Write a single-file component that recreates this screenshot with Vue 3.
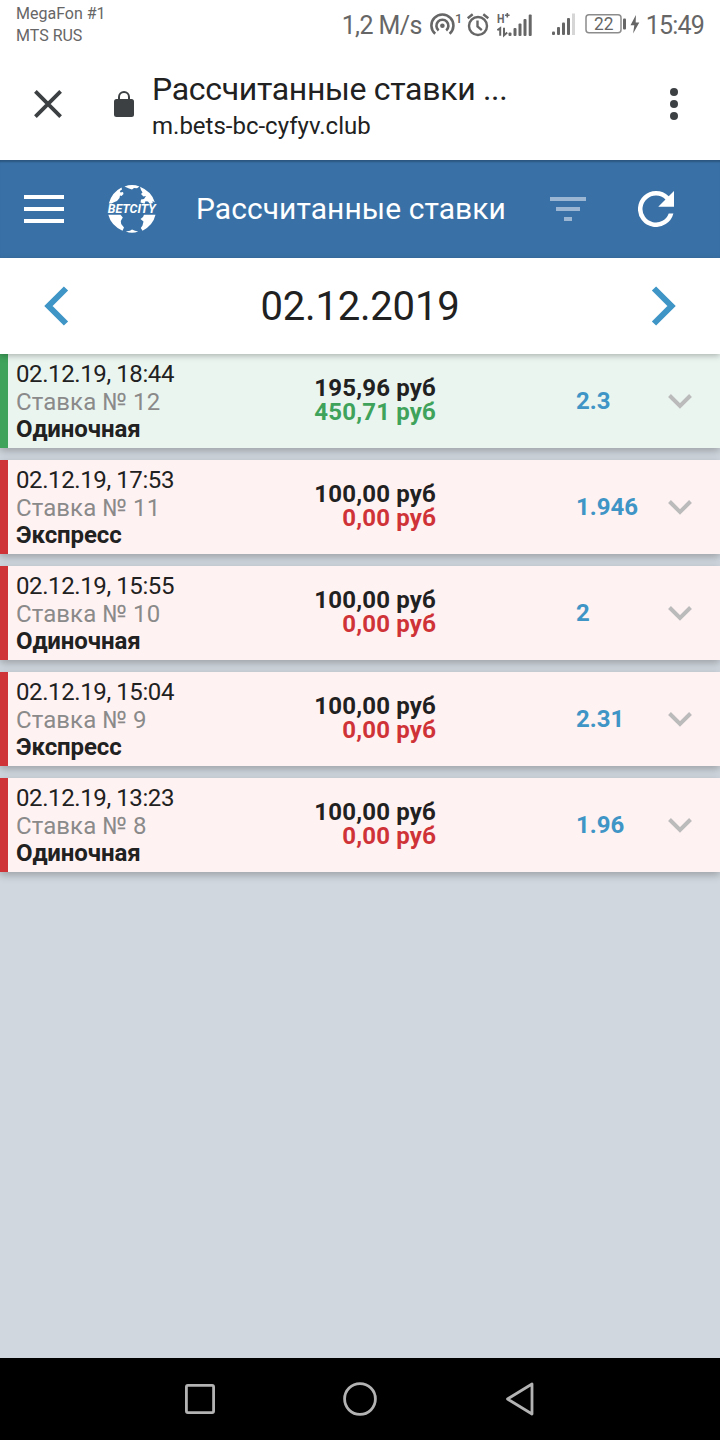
<template>
  <div class="screen">
    <header class="status-bar">
      <div class="carriers">
        <div>MegaFon #1</div>
        <div>MTS RUS</div>
      </div>
      <div class="status-icons">
        <span class="speed">1,2 M/s</span>
        <svg class="hotspot" width="34" height="28" viewBox="0 0 34 28">
          <g fill="none" stroke="#666" stroke-width="2.6">
            <path d="M5.2 22.8A11 11 0 1 1 19.6 22.8" />
            <path d="M8.6 19.4A6 6 0 1 1 16.2 19.4" />
          </g>
          <circle cx="12.4" cy="14.8" r="2.3" fill="#666" />
          <text x="25" y="11.6" font-size="13" font-weight="500">1</text>
        </svg>
        <svg class="alarm" width="24" height="28" viewBox="0 0 24 28">
          <g fill="none" stroke="#666" stroke-width="2.4">
            <circle cx="12" cy="15" r="9" />
            <path d="M11.5 9.5v6l4.3 3.6M1.7 7.3l5-4M22.3 7.3l-5-4" />
          </g>
        </svg>
        <svg class="signal" width="36" height="28" viewBox="0 0 36 28">
          <text x="0" y="12.2" font-size="13.5" font-weight="700" textLength="7.5" lengthAdjust="spacingAndGlyphs">H</text>
          <path d="M8 4.2h4.6M10.3 1.9v4.6" stroke="#666" stroke-width="1.6" />
          <path d="M.4 19.2l2.8-2v7.6M7 16.8v7.6l3.2-2.8" fill="none" stroke="#666" stroke-width="2" />
          <g fill="#666">
            <rect x="11.5" y="21.5" width="3" height="3.5" rx="1" />
            <rect x="16.5" y="17" width="3" height="8" rx="1" />
            <rect x="21.5" y="12.5" width="3" height="12.5" rx="1" />
            <rect x="26.5" y="8" width="3" height="17" rx="1" />
            <rect x="31.7" y="3.5" width="3" height="21.5" rx="1" />
          </g>
        </svg>
        <svg class="signal-2" width="24" height="28" viewBox="0 0 24 28">
          <g fill="#666">
            <rect x="0" y="20.5" width="3" height="3.5" rx="1" />
            <rect x="5" y="16" width="3" height="8" rx="1" />
            <rect x="10" y="11.5" width="3" height="12.5" rx="1" />
            <rect x="15" y="7" width="3" height="17" rx="1" />
            <rect x="20" y="2.5" width="3" height="21.5" fill="#d6d6d6" />
          </g>
        </svg>
        <svg class="battery" width="56" height="28" viewBox="0 0 56 28">
          <rect x="1" y="3.8" width="35" height="18" rx="3" fill="none" stroke="#8c8c8c" stroke-width="1.5" />
          <rect x="38" y="7.5" width="3" height="11" rx="1" fill="#666" />
          <text x="9" y="19.2" font-size="18" textLength="19.5" lengthAdjust="spacingAndGlyphs">22</text>
          <path d="M50.9 4l-5.4 10.2h3.8l-1.2 8.3 6.2-11h-3.6z" fill="#666" />
        </svg>
        <span class="clock">15:49</span>
      </div>
    </header>

    <div class="browser-bar">
      <svg class="close" width="28" height="28" viewBox="0 0 28 28">
        <path d="M1.4 1.4l25.2 25.2M26.6 1.4L1.4 26.6" stroke="#3c4043" stroke-width="3.8" />
      </svg>
      <svg class="lock" width="20" height="26" viewBox="0 0 20 26">
        <rect y="8" width="20" height="18" rx="2.5" fill="#3c4043" />
        <path d="M5 9V6a5 5 0 0 1 10 0v3" fill="none" stroke="#3c4043" stroke-width="2" />
      </svg>
      <div class="page-info">
        <div class="page-title">Рассчитанные ставки ...</div>
        <div class="page-url">m.bets-bc-cyfyv.club</div>
      </div>
      <svg class="more" width="8" height="32" viewBox="0 0 8 32">
        <g fill="#3c4043">
          <circle cx="4" cy="4" r="4" />
          <circle cx="4" cy="16" r="4" />
          <circle cx="4" cy="28" r="4" />
        </g>
      </svg>
    </div>

    <nav class="app-bar">
      <svg width="40" height="28" viewBox="0 0 40 28">
        <path d="M0 2h40M0 14h40M0 26h40" stroke="#fff" stroke-width="4" />
      </svg>
      <svg class="logo" width="50" height="50" viewBox="0 0 50 50">
        <g fill="#fff">
          <path d="M17.5 2.4Q25-.4 32.5 2.4L30 4.2 27 4 25 5.4 22 4.6z" />
          <path d="M1.8 19.5Q4.5 8.5 14.5 3.4L15 5.5 12.8 7 13.5 8.5 16 8 16.5 10 14.5 12 13 11.5 12.5 14 10 17 7 18.2 4.5 19.5z" />
          <path d="M33 2.8Q44.8 7.5 47.9 18.5L45.5 17 45.8 19 43 20 41 17.5 38.5 17.2 37.5 19.8 33.5 18.5 34 15.5 37 15 39 12 36.5 12.5 34 10 35.5 8.5 34 6z" />
          <path d="M1.3 30.8H13.5L15.8 33.5 13.8 37 14.2 40 17 43.5 15.5 46.7Q4 41.5 1.3 30.8z" />
          <path d="M37 30.8H48.5Q46 41.5 35.5 46.7L33.8 44 35.5 41.5 36.5 37.5 33.5 35 36 33z" />
          <path d="M18.8 47.4L23 46.8 25 45.4 28 46.8 31.2 47.4Q25 50 18.8 47.4z" />
        </g>
        <text x="0.8" y="29.4" class="logo-text" textLength="48" lengthAdjust="spacingAndGlyphs">BETCITY</text>
      </svg>
      <h1>Рассчитанные ставки</h1>
      <svg class="filter" width="36" height="24" viewBox="0 0 36 24">
        <path d="M0 2h36M6 12h24M14 22h8" stroke="#9ab6d2" stroke-width="4" />
      </svg>
      <svg class="refresh" width="36" height="36" viewBox="4 4 16 16">
        <path
          d="M17.65 6.35A7.95 7.95 0 0 0 12 4a8 8 0 1 0 7.73 10h-2.08A6 6 0 1 1 12 6c1.66 0 3.14.69 4.22 1.78L13 11h7V4z"
          fill="#fff"
        />
      </svg>
    </nav>

    <div class="date-bar">
      <svg width="25" height="40" viewBox="0 0 25 40">
        <path d="M22 2.5L4.5 20 22 37.5" fill="none" stroke="#3e95c6" stroke-width="6" />
      </svg>
      <span>{{ day }}</span>
      <svg width="25" height="40" viewBox="0 0 25 40">
        <path d="M3 2.5L20.5 20 3 37.5" fill="none" stroke="#3e95c6" stroke-width="6" />
      </svg>
    </div>

    <main class="bets">
      <div v-for="bet in bets" :key="bet.id" class="bet" :class="{ won: bet.won }">
        <div class="info">
          <div class="time">{{ bet.time }}</div>
          <div class="number">Ставка № {{ bet.id }}</div>
          <div class="kind">{{ bet.kind }}</div>
        </div>
        <div class="amounts">
          <div>{{ bet.stake }} руб</div>
          <div class="payout">{{ bet.payout }} руб</div>
        </div>
        <div class="odds">{{ bet.odds }}</div>
        <svg class="chevron" width="24" height="15" viewBox="0 0 24 15">
          <path d="M1.5 1.5L12 12 22.5 1.5" fill="none" stroke="#bbb" stroke-width="4" />
        </svg>
      </div>
    </main>

    <footer class="nav-bar">
      <svg width="30" height="30" viewBox="0 0 30 30">
        <rect x="1.4" y="1.4" width="27.2" height="27.2" rx="1.5" />
      </svg>
      <svg width="34" height="34" viewBox="0 0 34 34">
        <circle cx="17" cy="17" r="15.4" />
      </svg>
      <svg width="30" height="34" viewBox="0 0 30 34">
        <path d="M27 2v30L2.5 17z" stroke-linejoin="round" />
      </svg>
    </footer>
  </div>
</template>

<script setup>
import { ref } from 'vue'

const day = ref('02.12.2019')

const bets = ref([
  { id: 12, time: '02.12.19, 18:44', kind: 'Одиночная', stake: '195,96', payout: '450,71', odds: '2.3', won: true },
  { id: 11, time: '02.12.19, 17:53', kind: 'Экспресс', stake: '100,00', payout: '0,00', odds: '1.946', won: false },
  { id: 10, time: '02.12.19, 15:55', kind: 'Одиночная', stake: '100,00', payout: '0,00', odds: '2', won: false },
  { id: 9, time: '02.12.19, 15:04', kind: 'Экспресс', stake: '100,00', payout: '0,00', odds: '2.31', won: false },
  { id: 8, time: '02.12.19, 13:23', kind: 'Одиночная', stake: '100,00', payout: '0,00', odds: '1.96', won: false }
])
</script>

<style>
body {
  margin: 0;
}
</style>

<style scoped>
.screen {
  display: flex;
  flex-direction: column;
  width: 720px;
  height: 1440px;
  background: #d0d7de;
  color: #212121;
  font-family: Roboto, sans-serif;
  overflow: hidden;
  white-space: nowrap;
}

svg {
  display: block;
  flex: none;
}

.status-bar {
  display: flex;
  justify-content: space-between;
  height: 48px;
  padding: 0 16px;
  box-sizing: border-box;
  background: #fff;
  color: #666;
}

.status-bar text {
  fill: #666;
}

.carriers {
  padding-top: 3px;
  font-size: 16px;
  line-height: 22px;
}

.status-icons {
  display: flex;
  align-items: center;
  height: 50px;
}

.speed,
.clock {
  font-size: 25px;
}

.speed {
  letter-spacing: -0.6px;
}

.clock {
  margin-left: 5px;
  letter-spacing: -0.8px;
}

.hotspot {
  margin-left: 8px;
}

.alarm {
  margin-left: 2px;
}

.signal {
  margin-left: 7px;
}

.signal-2 {
  margin-left: 19px;
}

.battery {
  margin-left: 9px;
}

.browser-bar {
  display: flex;
  align-items: center;
  height: 112px;
  padding: 0 42px 0 34px;
  box-sizing: border-box;
  background: #fff;
}

.lock {
  margin-left: 52px;
}

.page-info {
  flex: 1;
  margin-left: 18px;
  padding-top: 4px;
}

.page-title {
  font-size: 32px;
  letter-spacing: -0.32px;
  line-height: 40px;
}

.page-url {
  font-size: 24px;
  line-height: 34px;
}

.app-bar {
  display: flex;
  align-items: center;
  height: 98px;
  padding: 0 46px 0 24px;
  box-sizing: border-box;
  background: #3971a6;
  box-shadow: inset 0 3px 2px -1px #2b5680;
  color: #fff;
}

.logo {
  margin-left: 43px;
}

.logo-text {
  fill: #fff;
  font-size: 12.5px;
  font-style: italic;
  font-weight: 700;
}

h1 {
  flex: 1;
  margin: 0 0 0 39px;
  padding-bottom: 2px;
  font-size: 30px;
  font-weight: 400;
  letter-spacing: 0.06px;
}

.refresh {
  margin-left: 52px;
}

.date-bar {
  position: relative;
  display: flex;
  align-items: center;
  justify-content: space-between;
  height: 96px;
  padding: 0 44px;
  background: #fff;
  box-shadow: 0 2px 6px rgba(0, 0, 0, 0.26);
  font-size: 40px;
  letter-spacing: -0.2px;
}

.bets {
  display: flex;
  flex: 1;
  flex-direction: column;
  gap: 12px;
}

.bet {
  display: grid;
  grid-template-columns: 200px 220px 140px 116px;
  align-items: center;
  height: 94px;
  padding-left: 8px;
  border-left: 8px solid #cf3338;
  box-sizing: border-box;
  background: #fff2f2;
  box-shadow: 0 3px 8px rgba(0, 0, 0, 0.26);
  font-size: 24px;
}

.bet.won {
  border-left-color: #3fa35b;
  background: #ebf5f0;
}

.info {
  padding-top: 3px;
  line-height: 27.6px;
}

.time {
  letter-spacing: -0.4px;
}

.number {
  color: #8a8a8a;
  letter-spacing: 0.08px;
}

.kind {
  font-weight: 700;
  letter-spacing: -0.1px;
}

.amounts {
  padding-bottom: 2px;
  font-weight: 700;
  letter-spacing: 0.18px;
  line-height: 24px;
  text-align: right;
}

.payout {
  color: #cf3338;
}

.won .payout {
  color: #3fa35b;
}

.odds {
  justify-self: end;
  width: 0;
  color: #3e95c6;
  font-weight: 700;
}

.chevron {
  justify-self: end;
}

.nav-bar {
  position: relative;
  display: flex;
  align-items: center;
  justify-content: center;
  gap: 128px;
  height: 82px;
  background: #000;
}

.nav-bar svg {
  fill: none;
  stroke: #b3b3b3;
  stroke-width: 2.8;
}
</style>
